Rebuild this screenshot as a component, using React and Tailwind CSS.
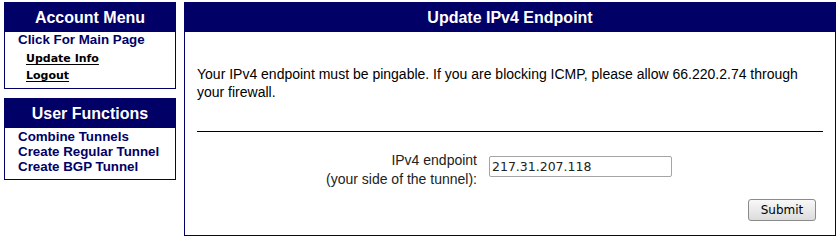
import React from "react";

const navy = "bg-[#000066]";

function MenuBox({ title, children, className = "" }) {
    return (
        <div className={`border border-[#000066] bg-white ${className}`}>
            <div className={`${navy} h-[29px] flex items-center justify-center text-white font-bold text-[16px]`}>
                {title}
            </div>
            {children}
        </div>
    );
}

function EndpointForm() {
    return (
        <div className="px-[12px]">
            <p className="mt-[33px] text-[14px] leading-[18px] text-black">
                Your IPv4 endpoint must be pingable. If you are blocking ICMP, please allow 66.220.2.74 through your firewall.
            </p>
            <div className="mt-[30px] h-px bg-black" />
            <div className="mt-[19px] flex items-start">
                <div className="w-[280px] text-right text-[14px] leading-[19px] text-[#222]">
                    IPv4 endpoint<br />(your side of the tunnel):
                </div>
                <input
                    className="ml-[12px] mt-[5px] w-[183px] h-[21px] border border-[#a5a5a5] rounded-[2px] px-[2px] text-[12.5px] text-[#222] font-['DejaVu_Sans',sans-serif] outline-none"
                    type="text"
                    defaultValue="217.31.207.118"
                />
            </div>
            <div className="mt-[10px] mb-[14px] flex justify-end pr-[7px]">
                <button className="w-[68px] h-[22px] border border-[#8a8a8a] rounded-[3px] bg-gradient-to-b from-[#f8f8f8] to-[#dcdcdc] text-[12px] text-black font-['DejaVu_Sans',sans-serif]">
                    Submit
                </button>
            </div>
        </div>
    );
}

export default function App() {
    return (
        <div className="w-[840px] h-[240px] bg-white pt-[2px] pl-[4px] flex items-start font-['Liberation_Sans',Arial,sans-serif]">
            {/* left menu */}
            <div className="w-[172px] flex flex-col">
                <MenuBox title="Account Menu">
                    <div className="pl-[13px] pb-[4px]">
                        <a className="block h-[15px] leading-[15px] text-[13.33px] font-bold text-[#000066]" href="#">Click For Main Page</a>
                        <ul className="pt-[3px] pl-[8px] font-['DejaVu_Sans',sans-serif] text-[11px] font-bold text-black">
                            <li className="leading-[17px]"><a className="underline underline-offset-[2px]" href="#">Update Info</a></li>
                            <li className="leading-[17px]"><a className="underline underline-offset-[2px]" href="#">Logout</a></li>
                        </ul>
                    </div>
                </MenuBox>
                <MenuBox title="User Functions" className="mt-[9px]">
                    <div className="pl-[13px] pt-px pb-[5px] text-[13.33px] leading-[15px] font-bold text-[#000066]">
                        <a className="block" href="#">Combine Tunnels</a>
                        <a className="block" href="#">Create Regular Tunnel</a>
                        <a className="block" href="#">Create BGP Tunnel</a>
                    </div>
                </MenuBox>
            </div>

            {/* main panel */}
            <div className="ml-[8px] w-[652px] border border-[#000066]">
                <div className={`${navy} h-[29px] flex items-center justify-center text-white font-bold text-[16px]`}>
                    Update IPv4 Endpoint
                </div>
                <EndpointForm />
            </div>
        </div>
    );
}
